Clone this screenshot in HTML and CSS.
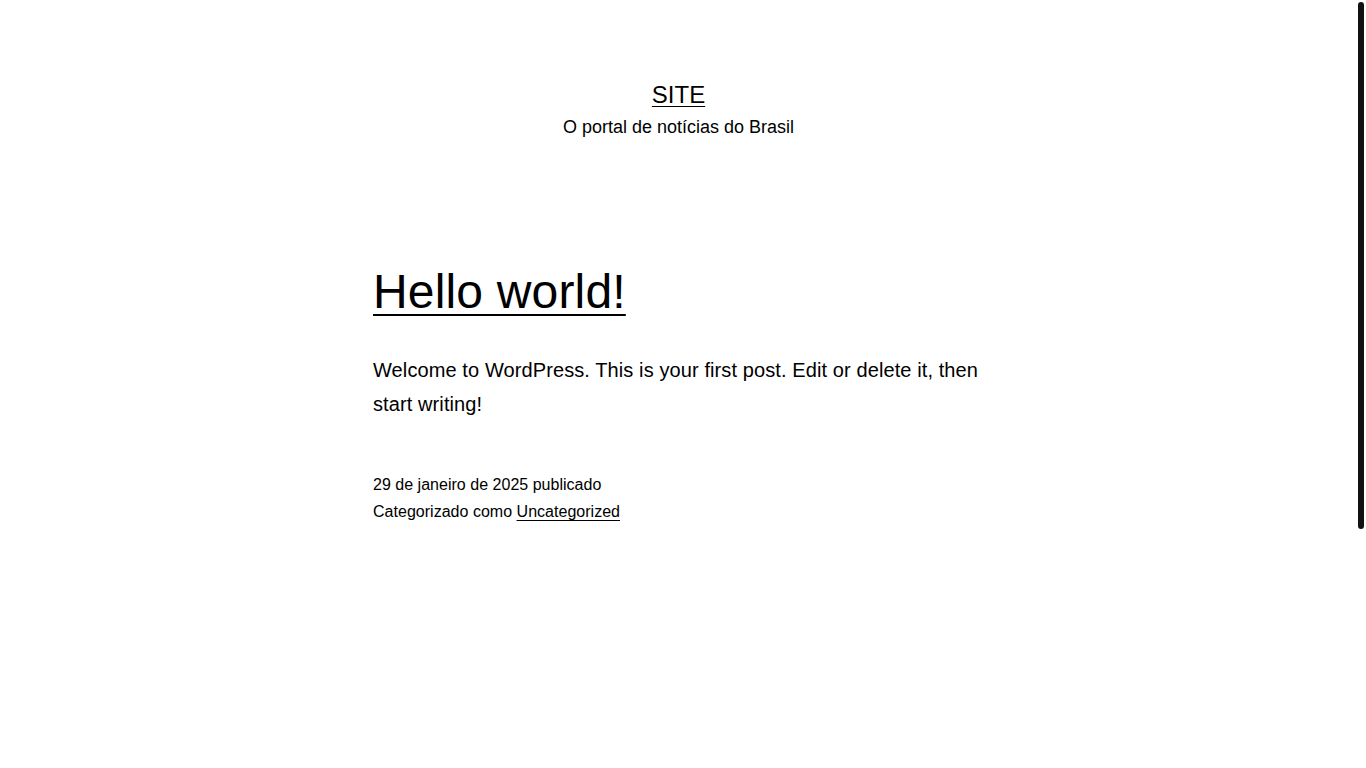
FILE: index.html
```html
<!DOCTYPE html>
<html lang="pt-BR">
<head>
<meta charset="utf-8">
<title>SITE – O portal de notícias do Brasil</title>
<link rel="stylesheet" href="styles.css">
</head>
<body>
<div class="page">
  <header class="site-header">
    <p class="site-title"><a href="#">SITE</a></p>
    <p class="site-description">O portal de notícias do Brasil</p>
  </header>
  <main class="content">
    <article class="post">
      <h2 class="entry-title"><a href="#">Hello world!</a></h2>
      <div class="entry-content">
        <p>Welcome to WordPress. This is your first post. Edit or delete it, then start writing!</p>
      </div>
      <footer class="entry-footer">
        <div class="posted-on">29 de janeiro de 2025 publicado</div>
        <div class="cat-links">Categorizado como <a href="#">Uncategorized</a></div>
      </footer>
    </article>
  </main>
</div>
<div class="scroll-thumb"></div>
</body>
</html>
```
FILE: styles.css
```css
html, body {
  margin: 0;
  padding: 0;
  background: #fff;
}
body {
  font-family: "Liberation Sans", Arial, sans-serif;
  color: #000;
  padding-right: 9px;
}
a {
  color: #000;
  text-decoration: underline;
  text-underline-offset: 3px;
  text-decoration-thickness: 1px;
}
.page {
  display: flex;
  flex-direction: column;
  min-height: 768px;
}
.site-header {
  padding-top: 81px;
  text-align: center;
}
.site-title {
  margin: 0;
  font-size: 24px;
  line-height: 1.2;
}
.site-description {
  margin: 2px 0 0;
  font-size: 18px;
  line-height: 1.7;
}
.content {
  width: 611px;
  margin: 121px auto 0;
}
.entry-title {
  margin: 0;
  font-size: 48px;
  font-weight: 400;
  line-height: 1.2;
  letter-spacing: 0.17px;
}
.entry-title a {
  text-underline-offset: 6px;
  text-decoration-thickness: 2px;
}
.entry-content p {
  margin: 32px 0 0;
  font-size: 20px;
  line-height: 34px;
  letter-spacing: 0.1px;
}
.entry-footer {
  margin-top: 50px;
  font-size: 16px;
  line-height: 27px;
  letter-spacing: 0.02px;
}
.scroll-thumb {
  position: fixed;
  top: 2px;
  right: 2px;
  width: 6px;
  height: 527px;
  border-radius: 3px;
  background: #111;
}
```
